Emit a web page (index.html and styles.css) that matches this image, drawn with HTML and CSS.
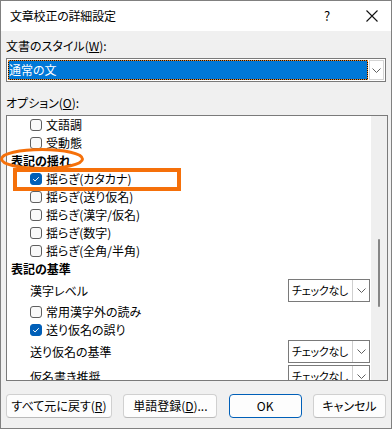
FILE: index.html
```html
<!DOCTYPE html>
<html lang="ja">
<head>
<meta charset="utf-8">
<link rel="stylesheet" href="styles.css">
</head>
<body>
<div class="dialog">
  <div class="titlebar">
    <span class="title">文章校正の詳細設定</span>
    <span class="help">?</span>
    <span class="close"><svg width="12" height="12" viewBox="0 0 12 12"><path d="M0.5 0.5 L11.5 11.5 M11.5 0.5 L0.5 11.5" stroke="#111" stroke-width="1.1" fill="none"/></svg></span>
  </div>
  <div class="body">
    <div class="label first">文書のスタイル(<u>W</u>):</div>
    <div class="select">
      <div class="sel-value">通常の文</div>
      <div class="sel-btn"><svg width="9" height="5" viewBox="0 0 9 5"><path d="M0.5 0.5 L4.5 4.5 L8.5 0.5" fill="none" stroke="#606060"/></svg></div>
    </div>
    <div class="label second">オプション(<u>O</u>):</div>
    <div class="listbox">
      <div class="items">
        <div class="row chk"><span class="box"></span>文語調</div>
        <div class="row chk"><span class="box"></span>受動態</div>
        <div class="row head">表記の揺れ</div>
        <div class="row chk"><span class="box on"><svg width="12" height="12" viewBox="0 0 12 12"><path d="M3.2 6.2 L5.1 8 L8.8 4.2" fill="none" stroke="#fff" stroke-width="1"/></svg></span>揺らぎ(カタカナ)</div>
        <div class="row chk"><span class="box"></span>揺らぎ(送り仮名)</div>
        <div class="row chk"><span class="box"></span>揺らぎ(漢字/仮名)</div>
        <div class="row chk"><span class="box"></span>揺らぎ(数字)</div>
        <div class="row chk"><span class="box"></span>揺らぎ(全角/半角)</div>
        <div class="row head">表記の基準</div>
        <div class="row combo"><span class="combo-label">漢字レベル</span><span class="drop"><span class="drop-text">チェックなし</span><span class="drop-btn"><svg width="9" height="5" viewBox="0 0 9 5"><path d="M0.5 0.5 L4.5 4.5 L8.5 0.5" fill="none" stroke="#606060"/></svg></span></span></div>
        <div class="row chk"><span class="box"></span>常用漢字外の読み</div>
        <div class="row chk"><span class="box on"><svg width="12" height="12" viewBox="0 0 12 12"><path d="M3.2 6.2 L5.1 8 L8.8 4.2" fill="none" stroke="#fff" stroke-width="1"/></svg></span>送り仮名の誤り</div>
        <div class="row combo"><span class="combo-label">送り仮名の基準</span><span class="drop"><span class="drop-text">チェックなし</span><span class="drop-btn"><svg width="9" height="5" viewBox="0 0 9 5"><path d="M0.5 0.5 L4.5 4.5 L8.5 0.5" fill="none" stroke="#606060"/></svg></span></span></div>
        <div class="row combo"><span class="combo-label">仮名書き推奨</span><span class="drop"><span class="drop-text">チェックなし</span><span class="drop-btn"><svg width="9" height="5" viewBox="0 0 9 5"><path d="M0.5 0.5 L4.5 4.5 L8.5 0.5" fill="none" stroke="#606060"/></svg></span></span></div>
      </div>
      <div class="scrollbar"><div class="thumb"></div></div>
    </div>
    <div class="buttons">
      <button class="btn w1">すべて元に戻す(<u>R</u>)</button>
      <button class="btn w2">単語登録(<u>D</u>)...</button>
      <button class="btn w3 default">OK</button>
      <button class="btn w3">キャンセル</button>
    </div>
  </div>
  <svg class="mark-ellipse" width="88" height="24" viewBox="0 0 88 24"><ellipse cx="42" cy="12" rx="40.5" ry="9.5" fill="none" stroke="#f5700a" stroke-width="3"/></svg>
  <div class="mark-rect"></div>
</div>
</body>
</html>
```
FILE: styles.css
```css
html, body {
  margin: 0;
  padding: 0;
  background: #f0f0f0;
}
body {
  font-family: "Noto Sans CJK JP", "Noto Sans", sans-serif;
  font-size: 12px;
  line-height: 16px;
  color: #000;
  font-feature-settings: "palt";
}
.dialog {
  position: relative;
  width: 392px;
  height: 429px;
  box-sizing: border-box;
  border: 1px solid #808080;
  background: #f0f0f0;
  display: flex;
  flex-direction: column;
}
.titlebar {
  height: 30px;
  background: #fff;
  display: flex;
  align-items: center;
  padding-left: 9px;
}
.title {
  flex: 1;
  letter-spacing: -0.2px;
}
.help {
  width: 20px;
  text-align: center;
  font-size: 13px;
  margin-right: 25px;
}
.close {
  width: 20px;
  display: flex;
  justify-content: center;
  margin-right: 9px;
}
.body {
  padding: 0 3px 0 5px;
  display: flex;
  flex-direction: column;
}
.label.first { margin-top: 7px; }
.label.second { margin-top: 13px; }
.select {
  margin-top: 4px;
  margin-right: 2px;
  height: 24px;
  box-sizing: border-box;
  border: 1px solid #7a7a7a;
  background: #fff;
  padding: 1px;
  display: flex;
}
.sel-value {
  flex: 1;
  box-sizing: border-box;
  border: 1px dotted #ef8a2a;
  background: linear-gradient(#0078d7, #0078d7) padding-box, #111 border-box;
  color: #fff;
  padding-left: 0;
  line-height: 18px;
}
.sel-btn {
  width: 15px;
  margin-left: 1px;
  box-sizing: border-box;
  border: 1px solid #d4d4d4;
  display: flex;
  align-items: center;
  justify-content: center;
}
.listbox {
  margin-top: 4px;
  height: 266px;
  box-sizing: border-box;
  border: 1px solid #7a7a7a;
  background: #fff;
  display: flex;
  overflow: hidden;
}
.items {
  flex: 1;
  overflow: hidden;
}
.row {
  height: 18px;
  display: flex;
  align-items: center;
  white-space: nowrap;
}
.row.chk { padding-left: 23px; }
.row.head {
  padding-left: 4px;
  font-weight: bold;
}
.box {
  width: 12px;
  height: 12px;
  box-sizing: border-box;
  border: 1px solid #5f5f5f;
  border-radius: 3px;
  background: #f9f9f9;
  margin-right: 4px;
  display: flex;
  align-items: center;
  justify-content: center;
  flex-shrink: 0;
}
.box.on {
  border-color: #005fb8;
  background: #005fb8;
}
.box.on svg { margin: -1px; }
.row.combo {
  height: 25px;
  padding-left: 23px;
  padding-right: 1px;
  flex-shrink: 0;
}
.combo-label { flex: 1; }
.drop {
  width: 82px;
  height: 23px;
  box-sizing: border-box;
  border: 1px solid #7a7a7a;
  background: #fff;
  display: flex;
}
.drop-text {
  flex: 1;
  padding-left: 3px;
  line-height: 21px;
  font-size: 11px;
  letter-spacing: -0.3px;
  overflow: hidden;
}
.drop-btn {
  width: 16px;
  border-left: 1px solid #cfcfcf;
  display: flex;
  align-items: center;
  justify-content: center;
}
.scrollbar {
  width: 16px;
  background: #efefef;
  position: relative;
}
.thumb {
  position: absolute;
  left: 7px;
  top: 123px;
  width: 2px;
  height: 68px;
  background: #868686;
  border-radius: 1px;
}
.buttons {
  margin-top: 13px;
  margin-right: 2px;
  display: flex;
  justify-content: space-between;
}
.btn {
  height: 24px;
  box-sizing: border-box;
  border: 1px solid #d0d0d0;
  border-bottom-color: #b9b9b9;
  border-radius: 4px;
  background: #fdfdfd;
  font: inherit;
  color: #000;
  padding: 0;
}
.w1 { width: 106px; }
.w2 { width: 94px; }
.w3 { width: 73px; }
.btn.default {
  border: 1px solid #005fb8;
}
.mark-ellipse {
  position: absolute;
  left: -1px;
  top: 146px;
}
.mark-rect {
  position: absolute;
  left: 12px;
  top: 167px;
  width: 168px;
  height: 23px;
  box-sizing: border-box;
  border: 4px solid #f5700a;
}
```
